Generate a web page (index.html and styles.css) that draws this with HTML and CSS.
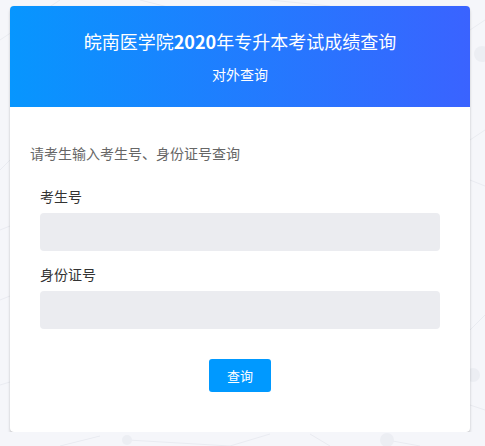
FILE: index.html
```html
<!DOCTYPE html>
<html>
<head>
    <meta charset="utf-8">
    <title>皖南医学院2020年专升本考试成绩查询</title>
    <link rel="stylesheet" href="styles.css">
</head>
<body>
    <!-- fundo de particulas (decorativo) -->
    <svg class="bg-net" width="485" height="446" viewBox="0 0 485 446">
        <g stroke="#e9ebf1" stroke-width="1" fill="none">
            <line x1="0" y1="40" x2="60" y2="0"/>
            <line x1="140" y1="0" x2="180" y2="10"/>
            <line x1="270" y1="0" x2="330" y2="6"/>
            <line x1="470" y1="30" x2="485" y2="20"/>
            <line x1="470" y1="140" x2="485" y2="130"/>
            <line x1="470" y1="180" x2="485" y2="186"/>
            <line x1="0" y1="170" x2="10" y2="160"/>
            <line x1="0" y1="230" x2="10" y2="226"/>
            <line x1="0" y1="300" x2="10" y2="296"/>
            <line x1="0" y1="385" x2="10" y2="382"/>
            <line x1="470" y1="330" x2="485" y2="315"/>
            <line x1="470" y1="405" x2="485" y2="410"/>
            <line x1="60" y1="446" x2="100" y2="436"/>
            <line x1="128" y1="440" x2="230" y2="446"/>
            <line x1="230" y1="446" x2="270" y2="434"/>
            <line x1="310" y1="434" x2="330" y2="446"/>
            <line x1="387" y1="440" x2="420" y2="446"/>
        </g>
        <g fill="#eceef3">
            <circle cx="482" cy="54" r="8"/>
            <circle cx="473" cy="375" r="7"/>
            <circle cx="387" cy="440" r="7"/>
            <circle cx="127" cy="440" r="5"/>
        </g>
    </svg>

    <div class="card">
        <div class="card-header">
            <h1 class="title">皖南医学院<b>2020</b>年专升本考试成绩查询</h1>
            <div class="subtitle">对外查询</div>
        </div>

        <div class="card-body">
            <p class="tip">请考生输入考生号、身份证号查询</p>

            <form class="query-form" onsubmit="return false;">
                <div class="field">
                    <label for="ksh">考生号</label>
                    <input type="text" id="ksh" class="field-input">
                </div>
                <div class="field">
                    <label for="sfzh">身份证号</label>
                    <input type="text" id="sfzh" class="field-input">
                </div>
                <div class="actions">
                    <button type="submit" class="btn-query">查询</button>
                </div>
            </form>
        </div>
    </div>
</body>
</html>
```

FILE: styles.css
```css
body {
    margin: 0;
    background: #f5f6fa;
    font-family: "Noto Sans CJK SC", "Noto Sans", sans-serif;
    color: #333;
}
.bg-net { position: absolute; left: 0; top: 0; z-index: 0; }

.card {
    position: relative;
    z-index: 1;
    width: 460px;
    margin: 6px 0 0 10px;
    background: #fff;
    border-radius: 4px;
    box-shadow: 0 3px 3px rgba(0, 0, 0, 0.18), 0 0 1px rgba(0, 0, 0, 0.12);
}
.card-header {
    padding: 23px 0;
    background: linear-gradient(to right, #0796fe, #3a63ff);
    border-radius: 4px 4px 0 0;
    color: #fff;
    text-align: center;
}
.title {
    margin: 0;
    font-size: 18px;
    line-height: 24px;
    font-weight: normal;
}
.title b { font-weight: bold; }
.subtitle {
    margin-top: 11px;
    font-size: 14px;
    line-height: 20px;
}

.card-body { padding: 36px 20px 40px; }
.tip {
    margin: 0 0 23px;
    font-size: 14px;
    line-height: 20px;
    color: #666;
}
.query-form { padding: 0 10px; }
.field { margin-bottom: 13px; }
.field label {
    display: block;
    margin-bottom: 7px;
    font-size: 14px;
    line-height: 20px;
    color: #333;
}
.field-input {
    display: block;
    box-sizing: border-box;
    width: 100%;
    height: 38px;
    border: none;
    border-radius: 4px;
    background: #ebecf0;
    outline: none;
}
.actions {
    padding-top: 17px;
    text-align: center;
}
.btn-query {
    width: 62px;
    height: 33px;
    border: none;
    border-radius: 3px;
    background: #0099ff;
    color: #fff;
    font-family: inherit;
    font-size: 13px;
    cursor: pointer;
}
```
